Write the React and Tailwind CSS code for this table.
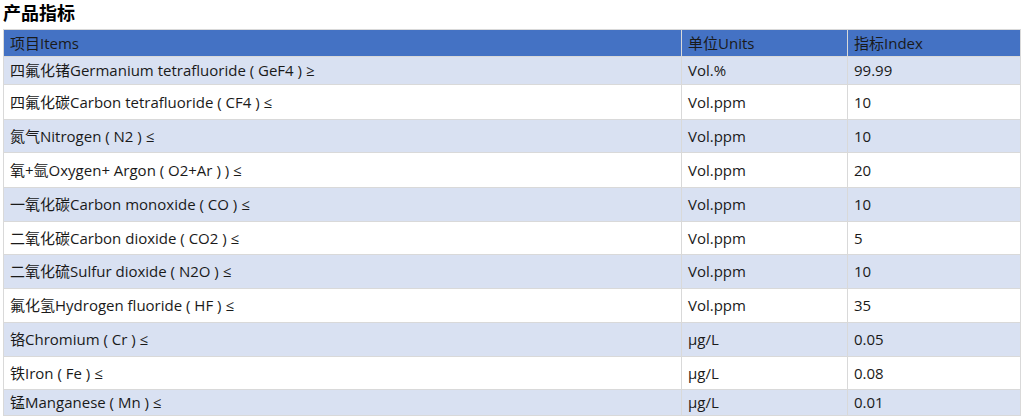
import React from "react";

const rows = [
  { item: "四氟化锗Germanium tetrafluoride ( GeF4 ) ≥", unit: "Vol.%", value: "99.99", h: "h-[28px]", bg: "bg-[#d9e1f2]" },
  { item: "四氟化碳Carbon tetrafluoride ( CF4 ) ≤", unit: "Vol.ppm", value: "10", h: "h-[35px]", bg: "bg-white" },
  { item: "氮气Nitrogen ( N2 ) ≤", unit: "Vol.ppm", value: "10", h: "h-[33px]", bg: "bg-[#d9e1f2]" },
  { item: "氧+氩Oxygen+ Argon ( O2+Ar ) ) ≤", unit: "Vol.ppm", value: "20", h: "h-[35px]", bg: "bg-white" },
  { item: "一氧化碳Carbon monoxide ( CO ) ≤", unit: "Vol.ppm", value: "10", h: "h-[34px]", bg: "bg-[#d9e1f2]" },
  { item: "二氧化碳Carbon dioxide ( CO2 ) ≤", unit: "Vol.ppm", value: "5", h: "h-[33px]", bg: "bg-white" },
  { item: "二氧化硫Sulfur dioxide ( N2O ) ≤", unit: "Vol.ppm", value: "10", h: "h-[34px]", bg: "bg-[#d9e1f2]" },
  { item: "氟化氢Hydrogen fluoride ( HF ) ≤", unit: "Vol.ppm", value: "35", h: "h-[34px]", bg: "bg-white" },
  { item: "铬Chromium ( Cr ) ≤", unit: "μg/L", value: "0.05", h: "h-[34px]", bg: "bg-[#d9e1f2]" },
  { item: "铁Iron ( Fe ) ≤", unit: "μg/L", value: "0.08", h: "h-[33px]", bg: "bg-white" },
  { item: "锰Manganese ( Mn ) ≤", unit: "μg/L", value: "0.01", h: "h-[25px]", bg: "bg-[#d9e1f2]" },
];

const font = { fontFamily: '"Open Sans", "Noto Sans CJK SC", sans-serif' };

export default function App() {
  return (
    <div className="w-[1024px] h-[418px] bg-white text-[#1a1a1a] overflow-hidden" style={font}>
      <div className="h-[29px] pl-[3px] text-[18px] font-bold leading-[26px] text-black">产品指标</div>
      <div className="ml-[3px] w-[1018px] border border-[#d9d9d9] text-[15px]">
        <div className="flex h-[27px] bg-[#4472c4] border-b border-[#d9d9d9]">
          <div className="w-[678px] border-r border-[#d9d9d9] px-[6px] flex items-center">项目Items</div>
          <div className="w-[166px] border-r border-[#d9d9d9] px-[6px] flex items-center">单位Units</div>
          <div className="flex-1 px-[6px] flex items-center">指标Index</div>
        </div>
        {rows.map((r, i) => (
          <div
            key={i}
            className={`flex ${r.h} ${r.bg} ${i < rows.length - 1 ? "border-b border-[#d9d9d9]" : ""}`}
          >
            <div className="w-[678px] border-r border-[#d9d9d9] px-[6px] flex items-center whitespace-nowrap">{r.item}</div>
            <div className="w-[166px] border-r border-[#d9d9d9] px-[6px] flex items-center">{r.unit}</div>
            <div className="flex-1 px-[6px] flex items-center">{r.value}</div>
          </div>
        ))}
      </div>
    </div>
  );
}
